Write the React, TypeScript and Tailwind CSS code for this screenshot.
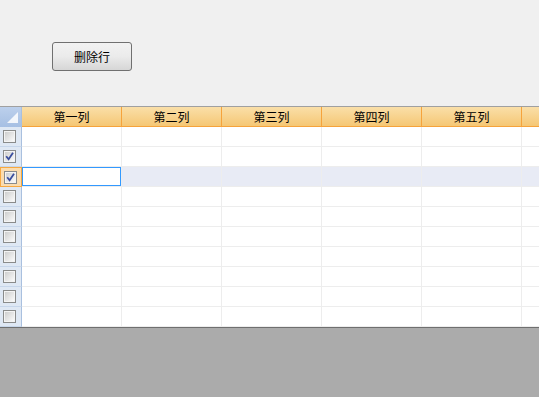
import React from 'react';

const columns = ['第一列', '第二列', '第三列', '第四列', '第五列', ''];
const checked = [false, true, true, false, false, false, false, false, false, false];
const CJK = '[font-family:"Noto_Sans_CJK_SC","Liberation_Sans",sans-serif]';

function CheckBox({ on }: { on: boolean }) {
  return (
    <span className="flex h-[13px] w-[13px] items-center justify-center border border-[#8a8b8b] bg-[#f4f4f4]">
      <span className="flex h-[9px] w-[9px] items-center justify-center bg-gradient-to-br from-[#cfcfcf] to-[#fafafa]">
        {on && (
          <svg width="9" height="9" viewBox="0 0 9 9">
            <path d="M1.2 4.2 L3.6 7.2 L8 0.8" fill="none" stroke="#3a4e9e" strokeWidth="1.8" />
          </svg>
        )}
      </span>
    </span>
  );
}

export default function App() {
  return (
    <div className={`flex h-[397px] w-[539px] flex-col overflow-hidden bg-[#f0f0f0] ${CJK}`}>
      <div className="h-[106px] pl-[52px] pt-[42px]">
        <button className="flex h-[29px] w-[80px] items-center justify-center rounded-[3px] border border-[#707070] bg-gradient-to-b from-[#f2f2f2] via-[#ebebeb] to-[#d6d6d6] text-[12px] text-black">
          删除行
        </button>
      </div>

      <div className="flex flex-col border-t border-[#a0a0a0] bg-white">
        <div className="flex h-[20px]">
          <div className="relative h-[20px] w-[22px] shrink-0 border-r border-[#a9c0df] bg-gradient-to-b from-[#bcd0ec] to-[#a6bfe3]">
            <svg className="absolute right-[3px] bottom-[4px]" width="11" height="11" viewBox="0 0 11 11">
              <path d="M11 0 L11 11 L0 11 Z" fill="#ffffff" opacity="0.85" />
            </svg>
          </div>
          {columns.map((c, i) => (
            <div
              key={i}
              className="flex h-[20px] w-[100px] shrink-0 items-center justify-center border-r border-b border-[#f6a33b] bg-gradient-to-b from-[#fadfa8] to-[#f5c774] text-[12px] leading-none text-black"
            >
              {c}
            </div>
          ))}
        </div>

        {checked.map((on, r) => {
          const sel = r === 2;
          return (
            <div key={r} className="flex h-[20px]">
              <div
                className={`flex h-[20px] w-[22px] shrink-0 items-center pl-[3px] ${
                  sel ? 'border border-[#f7a840] bg-[#fbdcae]' : 'border-r border-b border-r-[#a9c0df] border-b-[#c7d6ea] bg-[#dfe8f4]'
                }`}
              >
                <CheckBox on={on} />
              </div>
              {columns.map((_, i) => (
                <div
                  key={i}
                  className={`h-[20px] w-[100px] shrink-0 border-r border-b border-[#ededed] ${
                    sel ? (i === 0 ? 'bg-white' : 'bg-[#e8ebf5]') : 'bg-white'
                  }`}
                >
                  {sel && i === 0 && <div className="h-[19px] w-[99px] border border-[#3399ff]" />}
                </div>
              ))}
            </div>
          );
        })}
      </div>

      <div className="flex-1 border-t border-[#6f6f6f] bg-[#ababab]" />
    </div>
  );
}
